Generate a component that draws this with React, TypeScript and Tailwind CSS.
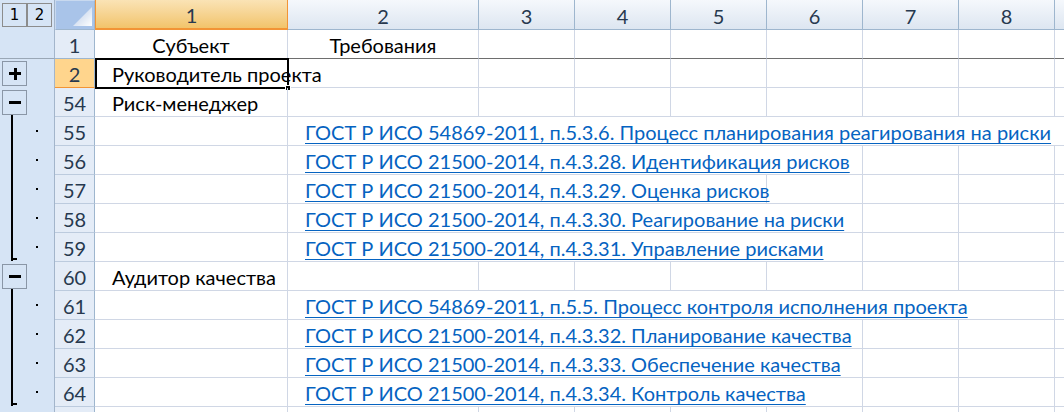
import React from "react";

type Outline = "none" | "plus" | "start" | "mid" | "end";
type Merge = { col: number; span: number; text: string; kind: "text" | "link" | "head" };
type RowDef = { n: number; outline: Outline; merges: Merge[]; selected?: boolean; first?: boolean; hideNum?: boolean };

const G1 = "ГОСТ Р ИСО 21500-2014, п.4.3.";

const rows: RowDef[] = [
  {
    n: 1,
    outline: "none",
    first: true,
    merges: [
      { col: 0, span: 1, text: "Субъект", kind: "head" },
      { col: 1, span: 1, text: "Требования", kind: "head" },
    ],
  },
  { n: 2, outline: "plus", selected: true, merges: [{ col: 0, span: 2, text: "Руководитель проекта", kind: "text" }] },
  { n: 54, outline: "start", merges: [{ col: 0, span: 1, text: "Риск-менеджер", kind: "text" }] },
  {
    n: 55,
    outline: "mid",
    merges: [{ col: 1, span: 8, text: "ГОСТ Р ИСО 54869-2011, п.5.3.6. Процесс планирования реагирования на риски", kind: "link" }],
  },
  { n: 56, outline: "mid", merges: [{ col: 1, span: 5, text: G1 + "28. Идентификация рисков", kind: "link" }] },
  { n: 57, outline: "mid", merges: [{ col: 1, span: 4, text: G1 + "29. Оценка рисков", kind: "link" }] },
  { n: 58, outline: "mid", merges: [{ col: 1, span: 5, text: G1 + "30. Реагирование на риски", kind: "link" }] },
  { n: 59, outline: "end", merges: [{ col: 1, span: 5, text: G1 + "31. Управление рисками", kind: "link" }] },
  { n: 60, outline: "start", merges: [{ col: 0, span: 1, text: "Аудитор качества", kind: "text" }] },
  {
    n: 61,
    outline: "mid",
    merges: [{ col: 1, span: 7, text: "ГОСТ Р ИСО 54869-2011, п.5.5. Процесс контроля исполнения проекта", kind: "link" }],
  },
  { n: 62, outline: "mid", merges: [{ col: 1, span: 5, text: G1 + "32. Планирование качества", kind: "link" }] },
  { n: 63, outline: "mid", merges: [{ col: 1, span: 5, text: G1 + "33. Обеспечение качества", kind: "link" }] },
  { n: 64, outline: "end", merges: [{ col: 1, span: 5, text: G1 + "34. Контроль качества", kind: "link" }] },
  { n: 65, outline: "none", merges: [], hideNum: true },
];

const SPAN: Record<number, string> = {
  1: "col-span-1",
  2: "col-span-2",
  3: "col-span-3",
  4: "col-span-4",
  5: "col-span-5",
  6: "col-span-6",
  7: "col-span-7",
  8: "col-span-8",
  9: "col-span-9",
};

const GRID =
  "grid grid-cols-[55px_40px_193px_191px_96px_96px_96px_96px_96px_96px_1fr]";

function OutlineSvg({ kind }: { kind: Outline }) {
  if (kind === "none") return null;
  const box = kind === "plus" || kind === "start";
  return (
    <svg width="54" height="29" viewBox="0 0 54 29" className="block" shapeRendering="crispEdges">
      {box && (
        <>
          <rect x="2.5" y="2.5" width="24" height="24" fill="none" stroke="#8a96a6" strokeWidth="1.5" />
          <rect x="9" y="13" width="12" height="3" fill="#000" />
        </>
      )}
      {kind === "plus" && <rect x="13.5" y="8.5" width="3" height="12" fill="#000" />}
      {kind === "start" && <rect x="11" y="27" width="2" height="2" fill="#000" />}
      {kind === "mid" && (
        <>
          <rect x="11" y="0" width="2" height="29" fill="#000" />
          <rect x="36" y="13" width="2" height="2" fill="#000" />
        </>
      )}
      {kind === "end" && (
        <>
          <rect x="11" y="0" width="2" height="28" fill="#000" />
          <rect x="11" y="25" width="6" height="2" fill="#000" />
          <rect x="36" y="13" width="2" height="2" fill="#000" />
        </>
      )}
    </svg>
  );
}

function DataCells({ row }: { row: RowDef }) {
  const cells: React.ReactNode[] = [];
  const bottom = row.first ? "border-b-[#6e6e6e]" : "border-b-[#d0d7e5]";
  let i = 0;
  while (i < 9) {
    const m = row.merges.find((x) => x.col === i);
    if (m) {
      const end = i + m.span;
      const last = end >= 9;
      const cls = [
        SPAN[m.span],
        "border-b border-[#d0d7e5] flex items-end pb-[1px] whitespace-nowrap overflow-visible",
        bottom,
        last ? "" : "border-r",
        m.kind === "head" ? "justify-center" : "pl-[17px]",
      ].join(" ");
      cells.push(
        <div key={i} className={cls}>
          {m.kind === "link" ? (
            <span className="text-[#0563c1] underline underline-offset-[3px] decoration-[1px]">{m.text}</span>
          ) : (
            <span className="text-black">{m.text}</span>
          )}
        </div>
      );
      i = end;
    } else {
      cells.push(
        <div
          key={i}
          className={["border-b border-[#d0d7e5]", bottom, i < 8 ? "border-r" : ""].join(" ")}
        />
      );
      i++;
    }
  }
  return <>{cells}</>;
}

function HeaderRow() {
  const cols = ["2", "3", "4", "5", "6", "7", "8"];
  return (
    <div className={GRID + " h-[30px]"}>
      <div className="bg-[#d6e4f5] border-r border-[#a3b5cb] flex items-start pt-[3px] pl-[2px] gap-[0px]">
        <div className="w-[25px] h-[24px] border border-[#8c8c8c] flex items-center justify-center font-['DejaVu_Sans',sans-serif] text-[15px] text-black leading-none">
          1
        </div>
        <div className="w-[25px] h-[24px] border border-[#8c8c8c] flex items-center justify-center font-['DejaVu_Sans',sans-serif] text-[15px] text-black leading-none">
          2
        </div>
      </div>
      <div className="bg-[#a9c4e9] border-r border-b border-[#9eb6ce] border-t border-t-[#c8d9ef] border-l border-l-[#c8d9ef] flex items-end justify-end pr-[2px] pb-[3px]">
        <svg width="19" height="19" viewBox="0 0 19 19" className="block">
          <defs>
            <linearGradient id="tri" x1="0" y1="0" x2="1" y2="1">
              <stop offset="0" stopColor="#b3c8e6" />
              <stop offset="1" stopColor="#ffffff" />
            </linearGradient>
          </defs>
          <polygon points="0,19 19,19 19,0" fill="url(#tri)" />
        </svg>
      </div>
      <div className="bg-gradient-to-b from-[#fae3b5] to-[#f2c46a] border-r border-l border-[#f29436] border-b-2 border-b-[#f29436] flex items-end justify-center pb-[1px] text-[#27394f]">
        1
      </div>
      {cols.map((c) => (
        <div
          key={c}
          className="bg-gradient-to-b from-[#f5f8fc] to-[#dde6f1] border-r border-b border-[#9eb6ce] flex items-end justify-center pb-[1px] text-[#27394f]"
        >
          {c}
        </div>
      ))}
      <div className="bg-gradient-to-b from-[#f5f8fc] to-[#dde6f1] border-b border-[#9eb6ce]" />
    </div>
  );
}

export default function App() {
  return (
    <div className="w-[1064px] h-[412px] overflow-hidden bg-white font-['Lato','Open_Sans',sans-serif] text-[20px] leading-[24px]">
      <HeaderRow />
      {rows.map((r) => (
        <div key={r.n} className={GRID + " h-[29px] relative"}>
          <div
            className={
              "bg-[#d6e4f5] border-r border-[#a3b5cb] " + (r.first ? "border-b border-b-[#9aa7b6]" : "")
            }
          >
            <OutlineSvg kind={r.outline} />
          </div>
          <div
            className={
              "border-r border-b border-r-[#9eb6ce] flex items-end justify-center pb-[1px] text-[#27394f] " +
              (r.selected
                ? "bg-[#ffd58d] border-b-[#f29436]"
                : r.first
                ? "bg-[#e4ecf7] border-b-[#9eb6ce]"
                : "bg-[#e4ecf7] border-b-[#bccbde]")
            }
          >
            {r.hideNum ? null : r.n}
          </div>
          <DataCells row={r} />
          {r.selected && (
            <div className="absolute left-[95px] top-[-1px] w-[194px] h-[31px] border-2 border-black pointer-events-none">
              <div className="absolute right-[-4px] bottom-[-4px] w-[6px] h-[6px] bg-black border border-white" />
            </div>
          )}
        </div>
      ))}
    </div>
  );
}
